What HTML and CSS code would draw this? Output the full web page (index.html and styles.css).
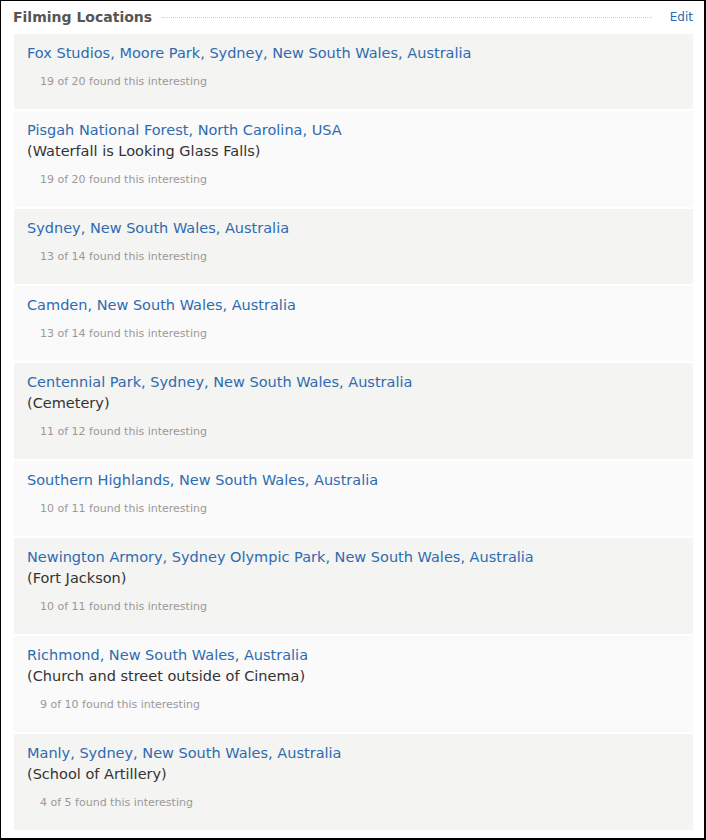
FILE: index.html
```html
<!DOCTYPE html>
<html lang="en">
<head>
  <meta charset="UTF-8">
  <title>Filming Locations</title>
  <link rel="stylesheet" href="styles.css">
</head>
<body>
  <div class="frame">
    <div class="section-head">
      <h3>Filming Locations</h3>
      <span class="rule"></span>
      <a class="edit" href="#">Edit</a>
    </div>

    <div class="loc odd">
      <a href="#">Fox Studios, Moore Park, Sydney, New South Wales, Australia</a>
      <p class="note">19 of 20 found this interesting</p>
    </div>
    <div class="loc even">
      <a href="#">Pisgah National Forest, North Carolina, USA</a>
      <div class="sub">(Waterfall is Looking Glass Falls)</div>
      <p class="note">19 of 20 found this interesting</p>
    </div>
    <div class="loc odd">
      <a href="#">Sydney, New South Wales, Australia</a>
      <p class="note">13 of 14 found this interesting</p>
    </div>
    <div class="loc even">
      <a href="#">Camden, New South Wales, Australia</a>
      <p class="note">13 of 14 found this interesting</p>
    </div>
    <div class="loc odd">
      <a href="#">Centennial Park, Sydney, New South Wales, Australia</a>
      <div class="sub">(Cemetery)</div>
      <p class="note">11 of 12 found this interesting</p>
    </div>
    <div class="loc even">
      <a href="#">Southern Highlands, New South Wales, Australia</a>
      <p class="note">10 of 11 found this interesting</p>
    </div>
    <div class="loc odd">
      <a href="#">Newington Armory, Sydney Olympic Park, New South Wales, Australia</a>
      <div class="sub">(Fort Jackson)</div>
      <p class="note">10 of 11 found this interesting</p>
    </div>
    <div class="loc even">
      <a href="#">Richmond, New South Wales, Australia</a>
      <div class="sub">(Church and street outside of Cinema)</div>
      <p class="note">9 of 10 found this interesting</p>
    </div>
    <div class="loc odd">
      <a href="#">Manly, Sydney, New South Wales, Australia</a>
      <div class="sub">(School of Artillery)</div>
      <p class="note">4 of 5 found this interesting</p>
    </div>
  </div>
</body>
</html>
```

FILE: styles.css
```css
html, body {
  margin: 0;
  padding: 0;
  background: #fff;
  font-family: "DejaVu Sans", Verdana, sans-serif;
}

.frame {
  box-sizing: border-box;
  width: 706px;
  height: 840px;
  border: 1px solid #000;
  border-right-width: 2px;
  border-bottom-width: 2px;
  padding: 6px 11px 0 13px;
}

.section-head {
  display: flex;
  align-items: center;
  height: 20px;
  margin-bottom: 7px;
}

.section-head h3 {
  margin: 0 0 0 -1px;
  font-size: 14px;
  font-weight: bold;
  color: #555;
  line-height: 20px;
}

.rule {
  flex: 1;
  border-top: 1px dotted #ccc;
  margin: 1px 18px 0 10px;
}

.edit {
  font-size: 12px;
  color: #2e6bb0;
  text-decoration: none;
}

.loc {
  padding: 9px 13px 19px;
  margin-bottom: 2px;
  font-size: 14.5px;
  line-height: 21px;
}

.loc.odd {
  background-color: #f4f4f2;
}

.loc.even {
  background-color: #fafafa;
}

.loc a {
  display: block;
  color: #2e6bb0;
  text-decoration: none;
}

.sub {
  color: #333;
}

.note {
  margin: 10px 0 0 13px;
  font-size: 11px;
  line-height: 16px;
  color: #999;
}
```
